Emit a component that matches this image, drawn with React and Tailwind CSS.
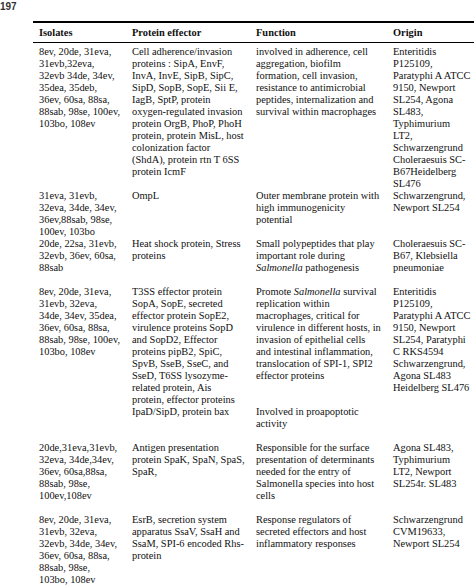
const rows = [
	{
		pad: false,
		cells: [
			["8ev, 20de, 31eva,", "31evb,32eva,", "32evb 34de, 34ev,", "35dea, 35deb,", "36ev, 60sa, 88sa,", "88sab, 98se, 100ev,", "103bo, 108ev"],
			["Cell adherence/invasion", "proteins : SipA, EnvF,", "InvA, InvE, SipB, SipC,", "SipD, SopB, SopE, Sii E,", "IagB, SptP, protein", "oxygen-regulated invasion", "protein OrgB, PhoP, PhoH", "protein, protein MisL, host", "colonization factor", "(ShdA), protein rtn T 6SS", "protein IcmF"],
			["involved in adherence, cell", "aggregation, biofilm", "formation, cell invasion,", "resistance to antimicrobial", "peptides, internalization and", "survival within macrophages"],
			["Enteritidis", "P125109,", "Paratyphi A ATCC", "9150, Newport", "SL254, Agona", "SL483,", "Typhimurium", "LT2,", "Schwarzengrund", "Choleraesuis SC-", "B67Heidelberg", "SL476"],
		],
	},
	{
		pad: false,
		cells: [
			["31eva, 31evb,", "32eva, 34de, 34ev,", "36ev,88sab, 98se,", "100ev, 103bo"],
			["OmpL"],
			["Outer membrane protein with", "high immunogenicity", "potential"],
			["Schwarzengrund,", "Newport SL254"],
		],
	},
	{
		pad: true,
		cells: [
			["20de, 22sa, 31evb,", "32evb, 36ev, 60sa,", "88sab"],
			["Heat shock protein, Stress", "proteins"],
			[
				"Small polypeptides that play",
				"important role during",
				<>
					<i>Salmonella</i> pathogenesis
				</>,
			],
			["Choleraesuis SC-", "B67, Klebsiella", "pneumoniae"],
		],
	},
	{
		pad: true,
		cells: [
			["8ev, 20de, 31eva,", "31evb, 32eva,", "34de, 34ev, 35dea,", "36ev, 60sa, 88sa,", "88sab, 98se, 100ev,", "103bo, 108ev"],
			["T3SS effector protein", "SopA, SopE, secreted", "effector protein SopE2,", "virulence proteins SopD", "and SopD2, Effector", "proteins pipB2, SpiC,", "SpvB, SseB, SseC, and", "SseD, T6SS lysozyme-", "related protein, Ais", "protein, effector proteins", "IpaD/SipD, protein bax"],
			[
				<>
					Promote <i>Salmonella</i> survival
				</>,
				"replication within",
				"macrophages, critical for",
				"virulence in different hosts, in",
				"invasion of epithelial cells",
				"and intestinal inflammation,",
				"translocation of SPI-1, SPI2",
				"effector proteins",
				"",
				"",
				"Involved in proapoptotic",
				"activity",
			],
			["Enteritidis", "P125109,", "Paratyphi A ATCC", "9150, Newport", "SL254, Paratyphi", "C RKS4594", "Schwarzengrund,", "Agona SL483", "Heidelberg SL476"],
		],
	},
	{
		pad: true,
		cells: [
			["20de,31eva,31evb,", "32eva, 34de,34ev,", "36ev, 60sa,88sa,", "88sab, 98se,", "100ev,108ev"],
			["Antigen presentation", "protein SpaK, SpaN, SpaS,", "SpaR,"],
			["Responsible for the surface", "presentation of determinants", "needed for the entry of", "Salmonella species into host", "cells"],
			["Agona SL483,", "Typhimurium", "LT2, Newport", "SL254r. SL483"],
		],
	},
	{
		pad: false,
		cells: [
			["8ev, 20de, 31eva,", "31evb, 32eva,", "32evb, 34de, 34ev,", "36ev, 60sa, 88sa,", "88sab, 98se,", "103bo, 108ev"],
			["EsrB, secretion system", "apparatus SsaV, SsaH and", "SsaM, SPI-6 encoded Rhs-", "protein"],
			["Response regulators of", "secreted effectors and host", "inflammatory responses"],
			["Schwarzengrund", "CVM19633,", "Newport SL254"],
		],
	},
];

const headers = ["Isolates", "Protein effector", "Function", "Origin"];

const App = () => {
	return (
		<div className="w-[474px] h-[587px] overflow-hidden bg-white pt-[1px]">
			<div className="h-[12px] leading-[12px] text-[10px] font-bold text-[#333] font-['Liberation_Sans',Arial,sans-serif]">
				197
			</div>
			<div className="ml-[33px] mt-[8px] w-[441px] text-[#111] font-['Liberation_Serif','Times_New_Roman',serif] text-[10.4px] leading-[12px] whitespace-nowrap">
				{/* Header */}
				<div className="grid grid-cols-[93px_124px_137px_1fr] border-t-2 border-b border-black pt-[4px] pb-[3px]">
					{headers.map((h) => (
						<div key={h} className="pl-[6px] font-bold">
							{h}
						</div>
					))}
				</div>

				{/* Body */}
				<div className="pt-[3px]">
					{rows.map((row, i) => (
						<div
							key={i}
							className={`grid grid-cols-[93px_124px_137px_1fr] ${row.pad ? "pb-[12px]" : ""}`}
						>
							{row.cells.map((lines, j) => (
								<div key={j} className="pl-[6px] overflow-hidden">
									{lines.map((line, k) => (
										<div key={k} className="h-[12px]">
											{line}
										</div>
									))}
								</div>
							))}
						</div>
					))}
				</div>
			</div>
		</div>
	);
};

export default App;
